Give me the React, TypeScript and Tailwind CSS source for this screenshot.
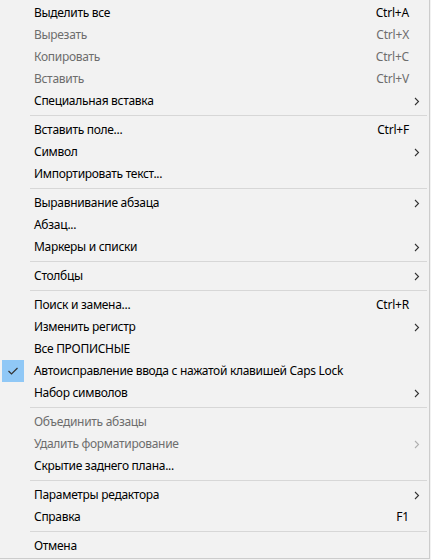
import React from "react";

type Item =
  | { sep: true }
  | {
      sep?: false;
      label: string;
      shortcut?: string;
      sub?: boolean;
      disabled?: boolean;
      checked?: boolean;
    };

const items: Item[] = [
  { label: "Выделить все", shortcut: "Ctrl+A" },
  { label: "Вырезать", shortcut: "Ctrl+X", disabled: true },
  { label: "Копировать", shortcut: "Ctrl+C", disabled: true },
  { label: "Вставить", shortcut: "Ctrl+V", disabled: true },
  { label: "Специальная вставка", sub: true },
  { sep: true },
  { label: "Вставить поле...", shortcut: "Ctrl+F" },
  { label: "Символ", sub: true },
  { label: "Импортировать текст..." },
  { sep: true },
  { label: "Выравнивание абзаца", sub: true },
  { label: "Абзац..." },
  { label: "Маркеры и списки", sub: true },
  { sep: true },
  { label: "Столбцы", sub: true },
  { sep: true },
  { label: "Поиск и замена...", shortcut: "Ctrl+R" },
  { label: "Изменить регистр", sub: true },
  { label: "Все ПРОПИСНЫЕ" },
  { label: "Автоисправление ввода с нажатой клавишей Caps Lock", checked: true },
  { label: "Набор символов", sub: true },
  { sep: true },
  { label: "Объединить абзацы", disabled: true },
  { label: "Удалить форматирование", sub: true, disabled: true },
  { label: "Скрытие заднего плана..." },
  { sep: true },
  { label: "Параметры редактора", sub: true },
  { label: "Справка", shortcut: "F1" },
  { sep: true },
  { label: "Отмена" },
];

function Chevron({ disabled }: { disabled?: boolean }) {
  return (
    <svg width="6" height="9" viewBox="0 0 6 9" className="block">
      <path
        d="M1 1 L4.5 4.5 L1 8"
        fill="none"
        stroke={disabled ? "#b0b0b0" : "#333333"}
        strokeWidth="1.1"
      />
    </svg>
  );
}

function Check() {
  return (
    <svg width="12" height="10" viewBox="0 0 12 10" className="block">
      <path d="M1.5 5 L4.5 8 L10.5 2" fill="none" stroke="#333" strokeWidth="1.2" />
    </svg>
  );
}

export default function App() {
  return (
    <div className="w-[431px] h-[560px] bg-[#f2f2f2]">
      <div
        className="w-[430px] h-[559px] bg-[#f2f2f2] border-r border-b border-[#cccccc] pt-[2px] text-[12px]"
        style={{ fontFamily: '"Noto Sans", "Segoe UI", sans-serif' }}
      >
        {items.map((it, i) =>
          it.sep ? (
            <div key={i} className="h-[7px] flex items-center pl-[30px] pr-[2px]">
              <div className="h-px w-full bg-[#d7d7d7]" />
            </div>
          ) : (
            <div key={i} className="h-[22px] flex items-center">
              <div className="w-[34px] h-[22px] pl-[2px] shrink-0">
                {it.checked && (
                  <div className="w-[22px] h-[22px] bg-[#90c8f6] flex items-center justify-center">
                    <Check />
                  </div>
                )}
              </div>
              <div
                className={`flex-1 whitespace-nowrap leading-none tracking-[-0.3px] ${
                  it.disabled ? "text-[#6d6d6d]" : "text-black"
                }`}
              >
                {it.label}
              </div>
              <div
                className={`whitespace-nowrap leading-none tracking-[-0.2px] ${
                  it.disabled ? "text-[#6d6d6d]" : "text-black"
                }`}
              >
                {it.shortcut}
              </div>
              <div className="w-[20px] h-[22px] shrink-0 flex items-center pl-[5px]">
                {it.sub && <Chevron disabled={it.disabled} />}
              </div>
            </div>
          )
        )}
      </div>
    </div>
  );
}
